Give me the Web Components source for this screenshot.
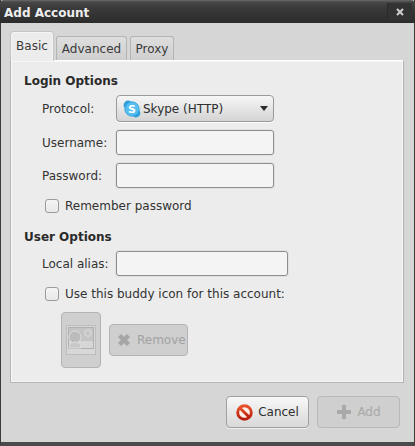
<!DOCTYPE html>
<html>
<head>
<meta charset="utf-8">
<title>Add Account</title>
<style>
    html, body { margin: 0; padding: 0; }
    body { width: 415px; height: 446px; overflow: hidden; font: 12px "DejaVu Sans", sans-serif; color: #2e2e2e; }
</style>
</head>
<body>
<add-account-window>
    <window-title slot="title">Add Account</window-title>

    <tab-strip slot="tabs">
        <tab-label active style="width:42px">Basic</tab-label>
        <tab-label style="width:71px">Advanced</tab-label>
        <tab-label style="width:44px">Proxy</tab-label>
    </tab-strip>

    <section-title style="margin-bottom:6px">Login Options</section-title>
    <form-row label="Protocol:" style="margin-bottom:8px">
        <combo-box>
            <svg slot="icon" width="18" height="18" viewBox="0 0 18 18">
                <circle cx="5" cy="5" r="4.4" fill="#2f9fdc"/>
                <circle cx="13" cy="13" r="4.4" fill="#2f9fdc"/>
                <circle cx="9" cy="9" r="7.2" fill="#55bdf0" stroke="#2f9fdc" stroke-width=".8"/>
                <text x="9" y="13" text-anchor="middle" font-family="DejaVu Sans" font-weight="bold" font-size="11" fill="#fff">S</text>
            </svg>
            Skype (HTTP)
        </combo-box>
    </form-row>
    <form-row label="Username:" style="margin-bottom:8px"><text-entry></text-entry></form-row>
    <form-row label="Password:" style="margin-bottom:9px"><text-entry></text-entry></form-row>
    <check-row style="margin-left:21px;margin-bottom:14px">Remember password</check-row>

    <section-title style="margin-bottom:6px">User Options</section-title>
    <form-row label="Local alias:" style="margin-bottom:9px"><text-entry wide></text-entry></form-row>
    <check-row style="margin-left:21px;margin-bottom:9px">Use this buddy icon for this account:</check-row>
    <buddy-picker></buddy-picker>

    <flat-button slot="actions">
        <svg slot="icon" width="17" height="17" viewBox="0 0 20 20">
            <defs><linearGradient id="stop" x1="0" y1="0" x2="0" y2="1"><stop offset="0" stop-color="#e8532b"/><stop offset="1" stop-color="#b81c0c"/></linearGradient></defs>
            <circle cx="10" cy="10" r="8" fill="#fbeee8" stroke="url(#stop)" stroke-width="3.4"/>
            <path d="M4.6 4.6 L15.4 15.4" stroke="url(#stop)" stroke-width="3.4"/>
        </svg>
        Cancel
    </flat-button>
    <flat-button slot="actions" disabled>
        <svg slot="icon" width="16" height="16" viewBox="0 0 16 16"><path d="M6 1h4v5h5v4h-5v5H6v-5H1V6h5z" fill="#a9a9a9"/></svg>
        Add
    </flat-button>
</add-account-window>

<script>
class AddAccountWindow extends HTMLElement {
    constructor() {
        super();
        this.attachShadow({ mode: "open" });
        this.shadowRoot.innerHTML = `
            <style>
                :host {
                    display: flex;
                    flex-direction: column;
                    box-sizing: border-box;
                    width: 415px;
                    height: 446px;
                    background: #d6d6d6;
                    border-left: 1px solid #3c3c3c;
                    border-right: 1px solid #3c3c3c;
                    border-bottom: 4px solid #4a4a4a;
                }
                .content {
                    flex: 1;
                    display: flex;
                    flex-direction: column;
                    padding: 9px 10px 0 9px;
                }
                .panel {
                    box-sizing: border-box;
                    height: 323px;
                    padding: 12px 0 0 13px;
                    background: #ececec;
                    border: 1px solid #b4b4b4;
                    border-top-color: #fff;
                    box-shadow: inset 0 0 0 1px #f6f6f6;
                }
                .actions {
                    display: flex;
                    justify-content: flex-end;
                    gap: 8px;
                    margin: 13px 4px 0 0;
                }
            </style>
            <slot name="title"></slot>
            <div class="content">
                <slot name="tabs"></slot>
                <div class="panel"><slot></slot></div>
                <div class="actions"><slot name="actions"></slot></div>
            </div>
        `;
    }
}

class WindowTitle extends HTMLElement {
    constructor() {
        super();
        this.attachShadow({ mode: "open" });
        this.shadowRoot.innerHTML = `
            <style>
                :host {
                    display: flex;
                    align-items: center;
                    justify-content: space-between;
                    box-sizing: border-box;
                    height: 23px;
                    margin: 0 -1px;
                    padding: 2px 0 0 4px;
                    background: linear-gradient(to bottom, #6a6a6a 0, #474747 2px, #3a3a3a 8px, #2c2c2c 100%);
                    border-radius: 4px 4px 0 0;
                    color: #eeeeee;
                    font-weight: bold;
                }
                .close {
                    display: flex;
                    align-items: center;
                    justify-content: center;
                    box-sizing: border-box;
                    width: 25px;
                    height: 17px;
                    margin: -2px 3px 0 0;
                    background: #333;
                    border-left: 1px solid #2a2a2a;
                }
            </style>
            <slot></slot>
            <div class="close">
                <svg width="8" height="8" viewBox="0 0 8 8"><path d="M1 1L7 7M7 1L1 7" stroke="#cfcfcf" stroke-width="2"/></svg>
            </div>
        `;
    }
}

class TabStrip extends HTMLElement {
    constructor() {
        super();
        this.attachShadow({ mode: "open" });
        this.shadowRoot.innerHTML = `
            <style>
                :host {
                    display: flex;
                    align-items: flex-end;
                    gap: 3px;
                    height: 29px;
                    padding-left: 1px;
                    margin-bottom: -1px;
                    position: relative;
                    z-index: 1;
                }
            </style>
            <slot></slot>
        `;
    }
}

class TabLabel extends HTMLElement {
    constructor() {
        super();
        this.attachShadow({ mode: "open" });
        this.shadowRoot.innerHTML = `
            <style>
                :host {
                    display: flex;
                    align-items: center;
                    justify-content: center;
                    box-sizing: border-box;
                    height: 24px;
                    margin-bottom: 1px;
                    background: linear-gradient(to bottom, #dedede, #cfcfcf);
                    border: 1px solid #b4b4b4;
                    border-bottom: 0;
                    border-radius: 3px 3px 0 0;
                    color: #3a3a3a;
                }
                :host([active]) {
                    height: 29px;
                    margin-bottom: 0;
                    padding-bottom: 2px;
                    background: #ececec;
                    border: 1px solid #f4f4f4;
                    border-bottom: 0;
                    box-shadow: 0 0 0 1px #c4c4c4;
                    clip-path: inset(-2px -2px 0 -2px);
                }
            </style>
            <slot></slot>
        `;
    }
}

class SectionTitle extends HTMLElement {
    constructor() {
        super();
        this.attachShadow({ mode: "open" });
        this.shadowRoot.innerHTML = `
            <style>
                :host { display: block; font-weight: bold; line-height: 16px; color: #2a2a2a; }
            </style>
            <slot></slot>
        `;
    }
}

class FormRow extends HTMLElement {
    constructor() {
        super();
        this.attachShadow({ mode: "open" });
        this.shadowRoot.innerHTML = `
            <style>
                :host { display: flex; align-items: center; padding-left: 18px; }
                .label { width: 74px; color: #333; }
            </style>
            <div class="label"></div>
            <slot></slot>
        `;
    }

    connectedCallback() {
        this.shadowRoot.querySelector(".label").textContent = this.getAttribute("label") || "";
    }
}

class ComboBox extends HTMLElement {
    constructor() {
        super();
        this.attachShadow({ mode: "open" });
        this.shadowRoot.innerHTML = `
            <style>
                :host {
                    display: flex;
                    align-items: center;
                    gap: 2px;
                    box-sizing: border-box;
                    width: 158px;
                    height: 27px;
                    padding: 0 5px 0 6px;
                    background: linear-gradient(to bottom, #f6f6f6, #d4d4d4);
                    border: 1px solid #9a9a9a;
                    border-radius: 4px;
                    box-shadow: 0 1px 0 #fafafa;
                    color: #2e2e2e;
                }
                .text { flex: 1; }
                .arrow { width: 0; height: 0; border: 4px solid transparent; border-top: 5px solid #2a2a2a; border-bottom: 0; }
            </style>
            <slot name="icon"></slot>
            <span class="text"><slot></slot></span>
            <span class="arrow"></span>
        `;
    }
}

class TextEntry extends HTMLElement {
    constructor() {
        super();
        this.attachShadow({ mode: "open" });
        this.shadowRoot.innerHTML = `
            <style>
                :host {
                    display: block;
                    box-sizing: border-box;
                    width: 158px;
                    height: 25px;
                    background: #f4f4f4;
                    border: 1px solid #8e8e8e;
                    border-radius: 3px;
                    box-shadow: 0 0 0 1px #e0e0e0;
                }
                :host([wide]) { width: 172px; }
            </style>
        `;
    }
}

class CheckRow extends HTMLElement {
    constructor() {
        super();
        this.attachShadow({ mode: "open" });
        this.shadowRoot.innerHTML = `
            <style>
                :host { display: flex; align-items: center; gap: 6px; line-height: 18px; color: #333; }
                .box {
                    box-sizing: border-box;
                    width: 14px;
                    height: 14px;
                    background: linear-gradient(to bottom, #f4f4f4, #e8e8e8);
                    border: 1px solid #9c9c9c;
                    border-radius: 3px;
                }
            </style>
            <span class="box"></span>
            <slot></slot>
        `;
    }
}

class BuddyPicker extends HTMLElement {
    constructor() {
        super();
        this.attachShadow({ mode: "open" });
        this.shadowRoot.innerHTML = `
            <style>
                :host { display: flex; align-items: center; gap: 8px; margin-left: 37px; }
                .icon {
                    display: flex;
                    align-items: center;
                    justify-content: center;
                    box-sizing: border-box;
                    width: 40px;
                    height: 56px;
                    background: #cfcfcf;
                    border: 1px solid #b4b4b4;
                    border-radius: 4px;
                }
                .remove {
                    display: flex;
                    align-items: center;
                    gap: 6px;
                    box-sizing: border-box;
                    width: 79px;
                    height: 32px;
                    padding-left: 7px;
                    background: #cfcfcf;
                    border: 1px solid #b4b4b4;
                    border-radius: 4px;
                    color: #a2a2a2;
                }
            </style>
            <div class="icon">
                <svg width="30" height="30" viewBox="0 0 30 30">
                    <rect x=".5" y=".5" width="29" height="29" fill="#d8d8d8" stroke="#bdbdbd"/>
                    <rect x="2.5" y="2.5" width="25" height="21" fill="#c4c4c4" stroke="#b0b0b0"/>
                    <rect x="3" y="16" width="24" height="7" fill="#d6d6d6"/>
                    <circle cx="9" cy="12" r="6" fill="#bbb" stroke="#dedede"/>
                    <path d="M3 23c0-4 3-6 6-6s6 2 6 6z" fill="#c8c8c8" stroke="#dedede"/>
                    <circle cx="22" cy="8" r="3.4" fill="#c6c6c6" stroke="#dedede"/>
                </svg>
            </div>
            <div class="remove">
                <svg width="14" height="14" viewBox="0 0 14 14"><path d="M2.5 2.5L11.5 11.5M11.5 2.5L2.5 11.5" stroke="#a6a6a6" stroke-width="4.4"/></svg>
                <span>Remove</span>
            </div>
        `;
    }
}

class FlatButton extends HTMLElement {
    constructor() {
        super();
        this.attachShadow({ mode: "open" });
        this.shadowRoot.innerHTML = `
            <style>
                :host {
                    display: flex;
                    align-items: center;
                    justify-content: center;
                    gap: 5px;
                    box-sizing: border-box;
                    width: 83px;
                    height: 32px;
                    background: linear-gradient(to bottom, #f8f8f8, #d8d8d8);
                    border: 1px solid #a0a0a0;
                    border-radius: 4px;
                    box-shadow: 0 1px 0 #eee;
                    color: #2e2e2e;
                }
                :host([disabled]) {
                    background: #cfcfcf;
                    border-color: #b8b8b8;
                    box-shadow: none;
                    color: #a8a8a8;
                }
            </style>
            <slot name="icon"></slot>
            <slot></slot>
        `;
    }
}

customElements.define("add-account-window", AddAccountWindow);
customElements.define("window-title", WindowTitle);
customElements.define("tab-strip", TabStrip);
customElements.define("tab-label", TabLabel);
customElements.define("section-title", SectionTitle);
customElements.define("form-row", FormRow);
customElements.define("combo-box", ComboBox);
customElements.define("text-entry", TextEntry);
customElements.define("check-row", CheckRow);
customElements.define("buddy-picker", BuddyPicker);
customElements.define("flat-button", FlatButton);
</script>
</body>
</html>
